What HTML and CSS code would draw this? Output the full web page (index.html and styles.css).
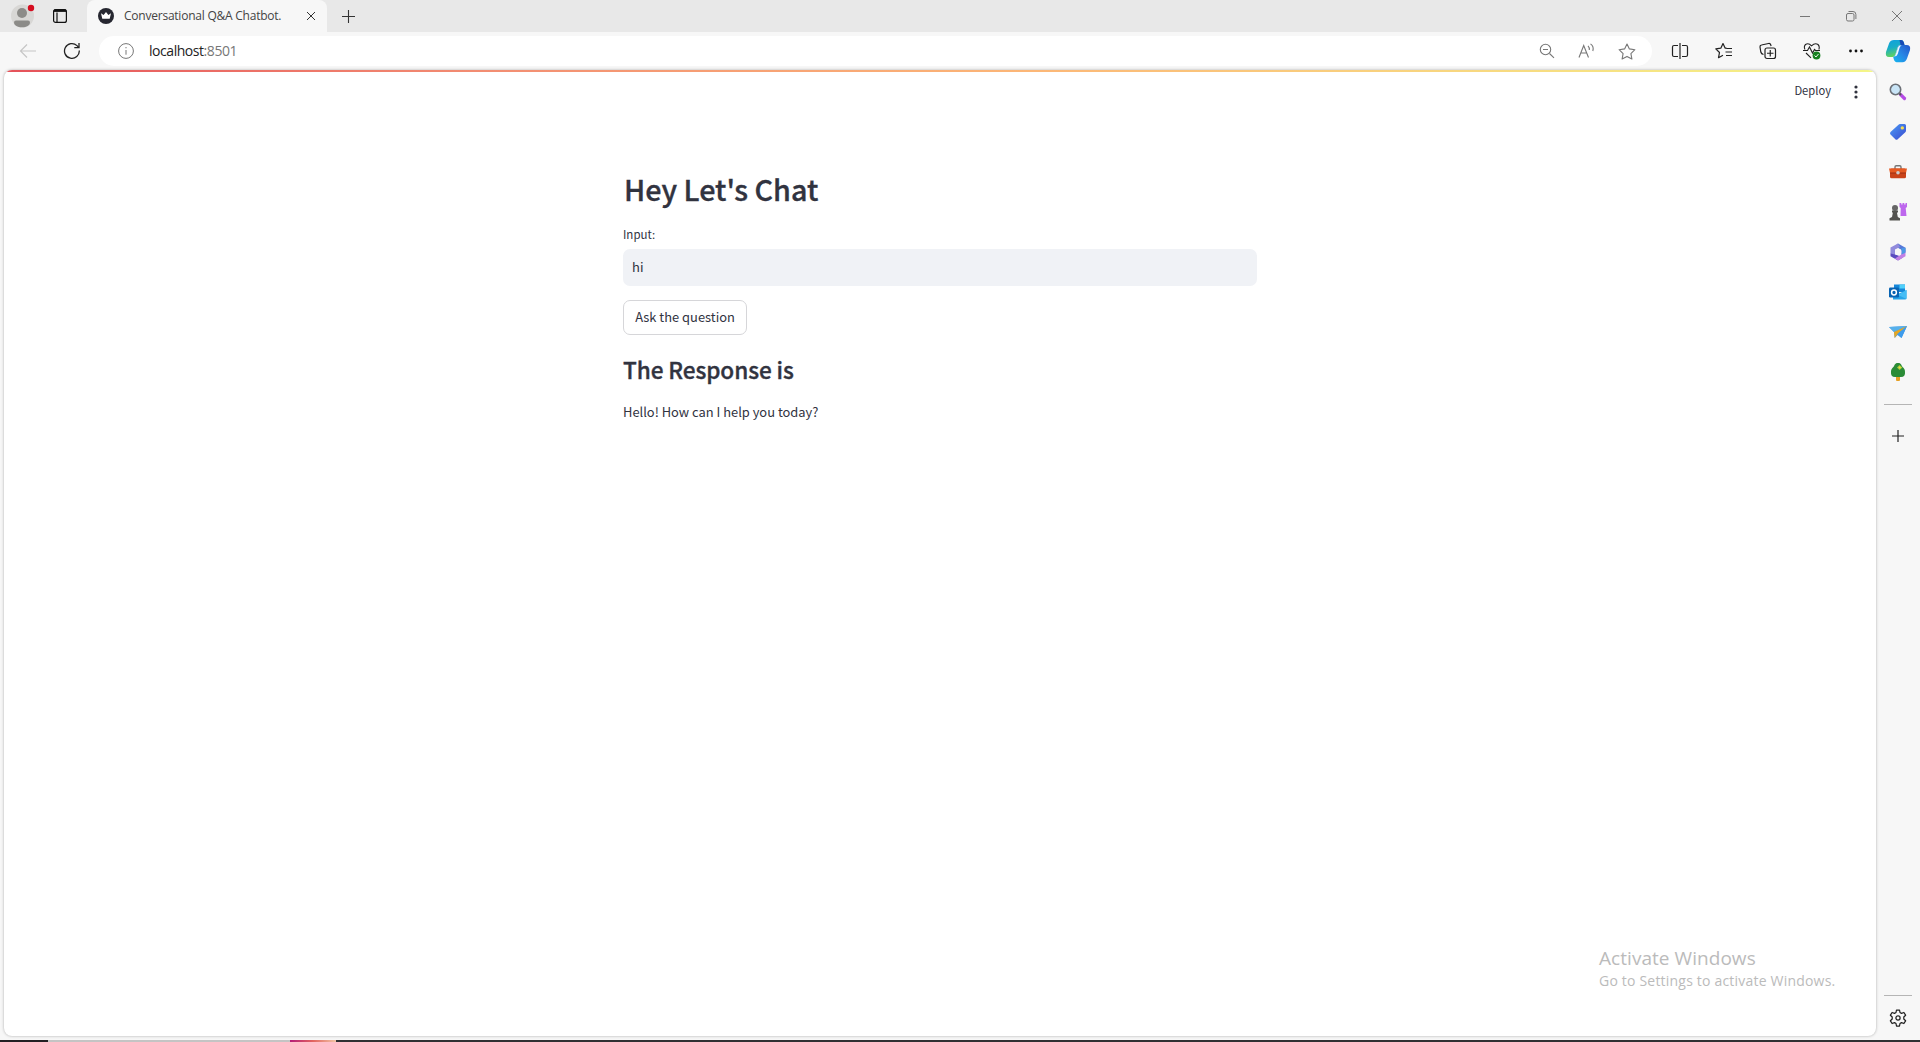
FILE: index.html
```html
<!DOCTYPE html>
<html lang="en">
<head>
<meta charset="utf-8">
<title>Conversational Q&amp;A Chatbot.</title>
<link rel="stylesheet" href="styles.css">
</head>
<body>
<div class="browser">
  <header class="tabstrip">
    <div class="profile"><svg width="24" height="24" viewBox="0 0 24 24"><circle cx="11.500" cy="12" r="11.500" fill="#d8d7d5"/><circle cx="11" cy="9" r="5" fill="#8c8b88"/><path d="M3 18.500q0-2 2-2h12q2 0 2 2c0 3-3.500 4.800-8 4.800s-8-1.800-8-4.800z" fill="#8c8b88"/><circle cx="20" cy="4" r="3.200" fill="#d50d20"/></svg></div>
    <div class="workspaces"><svg width="16" height="16" viewBox="0 0 16 16" fill="none" stroke="#111" stroke-width="1.200"><rect x="1.600" y="1.600" width="12.800" height="12.800" rx="2"/><path d="M1.600 3.200h12.800M5 4.500v10"/><path d="M2 2.500h12" stroke-width="2.200"/></svg></div>
    <div class="tab">
      <svg width="16" height="16" viewBox="0 0 16 16"><circle cx="8" cy="8" r="8" fill="#262730"/><path d="M3 5.300l2.600 1.800L8 3.900l2.400 3.200L13 5.300l-1.300 5.500H4.300z" fill="#fff"/></svg>
      <span class="tab-title">Conversational Q&amp;A Chatbot.</span>
      <svg class="tab-close" width="10" height="10" viewBox="0 0 10 10" stroke="#333" stroke-width="1"><path d="M1 1l8 8M9 1L1 9"/></svg>
    </div>
    <svg class="new-tab" width="15" height="15" viewBox="0 0 15 15" stroke="#333" stroke-width="1.100"><path d="M7.500 1v13M1 7.500h13"/></svg>
    <div class="window-controls">
      <svg width="12" height="12" viewBox="0 0 12 12" stroke="#777"><path d="M1 6.500h10"/></svg>
      <svg width="12" height="12" viewBox="0 0 12 12" fill="none" stroke="#777"><rect x="1.500" y="3.500" width="7.500" height="7.500" rx="1.500"/><path d="M3.500 1.500H8Q10.900 1.500 10.900 4.500V9"/></svg>
      <svg width="12" height="12" viewBox="0 0 12 12" stroke="#777"><path d="M1 1l10 10M11 1L1 11"/></svg>
    </div>
  </header>
  <nav class="toolbar">
    <svg class="back" width="18" height="16" viewBox="0 0 18 16" fill="none" stroke="#c6c6c6" stroke-width="1.200"><path d="M17 8H1.500M8 1.500L1.500 8 8 14.500"/></svg>
    <svg class="reload" width="18" height="18" viewBox="0 0 18 18" fill="none" stroke="#222" stroke-width="1.300"><path d="M16.300 8.500A7.400 7.400 0 1 1 14 3.600L15.800 5.500"/><path d="M16 1v4.700h-4.700"/></svg>
    <div class="address">
      <svg width="16" height="16" viewBox="0 0 16 16" fill="none" stroke="#777"><circle cx="8" cy="8" r="7.400"/><path d="M8 7v4.700M8 4v1.300"/></svg>
      <span class="url">localhost<span class="port">:8501</span></span>
      <div class="address-actions">
        <svg width="16" height="16" viewBox="0 0 16 16" fill="none" stroke="#777" stroke-width="1.100"><circle cx="6.500" cy="6.500" r="5.200"/><path d="M10.500 10.500l4.500 4.300M4 6.500h5"/></svg>
        <svg width="17" height="16" viewBox="0 0 17 16" fill="none" stroke="#777" stroke-width="1.100"><path d="M1 14.500L5.700 2.500 10.500 14.500M2.700 10h6.200M10 2.800q1.700 1.700 1.300 4.200M12.500.900Q16.200 3.500 14.800 8"/></svg>
        <svg width="18" height="17" viewBox="0 0 18 17" fill="none" stroke="#777" stroke-width="1.100" stroke-linejoin="round"><path d="M9 1l2.400 4.900 5.500.8-4 3.900 1 5.400L9 13.400 4.100 16l1-5.400-4-3.900 5.500-.8z"/></svg>
      </div>
    </div>
    <div class="actions">
      <svg width="18" height="18" viewBox="0 0 18 18" fill="none" stroke="#222" stroke-width="1.200"><path d="M7 3.500H3q-1.500 0-1.500 1.500v8q0 1.500 1.500 1.500h4M11 3.500h4q1.500 0 1.500 1.500v8q0 1.500-1.500 1.500h-4M9 1v16"/></svg>
      <svg width="18" height="18" viewBox="0 0 18 18" fill="none" stroke="#222" stroke-width="1.200" stroke-linejoin="round"><path d="M11.500 6.200h-1.300L8 1.500 5.800 6.200l-5 .7 3.700 3.600-1 5.200L8 13.300M11.500 6.500H17M10.500 10H17M11 13.500h6"/></svg>
      <svg width="18" height="18" viewBox="0 0 18 18" fill="none" stroke="#222" stroke-width="1.200"><path d="M4.500 12.500Q2.300 12 1.800 10L1 5q-.2-1.700 1.500-2l7-1.500q1.800-.3 2.300 1.500l.3 1"/><rect x="6" y="6" width="10.500" height="10.500" rx="2"/><path d="M11.250 8v6.500M8 11.250h6.500"/></svg>
      <svg width="18" height="18" viewBox="0 0 18 18" fill="none" stroke="#222" stroke-width="1.100"><path d="M2 7.500Q.5 4.500 2.500 2.500 5.500.500 8.500 3.800 12 .500 15 2.500q2 2 .8 5M0 8.500h4.500L6.500 5l3 6 2-3.500 1 1h4.500M3 11l5 4.800"/><circle cx="13.500" cy="13.500" r="3.900" fill="#168020" stroke="none"/><path d="M11.500 13.500l1.500 1.500 2.500-3" stroke="#fff" stroke-width=".9"/></svg>
      <svg width="18" height="18" viewBox="0 0 18 18" fill="#111"><circle cx="3.500" cy="9" r="1.400"/><circle cx="9" cy="9" r="1.400"/><circle cx="14.500" cy="9" r="1.400"/></svg>
    </div>
    <svg class="copilot" width="26" height="24" viewBox="0 0 26 24">
      <defs><linearGradient id="cpA" x1="0" y1="0" x2=".3" y2="1"><stop stop-color="#109fe0"/><stop offset=".5" stop-color="#18adc7"/><stop offset="1" stop-color="#62d45b"/></linearGradient><linearGradient id="cpB" x1="1" y1="0" x2="0" y2="1"><stop stop-color="#2355c9"/><stop offset=".5" stop-color="#2785e5"/><stop offset="1" stop-color="#14b8ef"/></linearGradient></defs>
      <path d="M9 1h7q2 0 2.700 2l.8 3h-4q-2 0-2.700 2l-2.600 8q-.7 2-2.700 2H4q-4 0-3-5L4.200 4Q5.500 1 9 1z" fill="url(#cpA)"/>
      <path d="M17.500 23.200h-6q-2.500 0-3.300-5.400 1.500-.300 2.200-2l2.600-8Q14 6 16 6h5.500q4.500 0 3.500 5l-3 8.500q-1.200 3.700-4.500 3.700z" fill="url(#cpB)"/><path d="M14.500 1H16q2 0 2.700 2l.8 3h-4Z" fill="#1749b5"/><path d="M16.800 6.500q-1.600.3-2.100 2l-2 6.500q-.8 2.500-3.700 2.500 1.200-.5 1.700-2l2.300-7q.7-2 2.400-2z" fill="#edfaff"/>
    </svg>
  </nav>
  <div class="workspace">
    <main class="page">
      <div class="decoration"></div>
      <div class="app-header"><span class="deploy">Deploy</span><svg width="4" height="14" viewBox="0 0 4 14" fill="#31333f"><circle cx="2" cy="2" r="1.600"/><circle cx="2" cy="7" r="1.600"/><circle cx="2" cy="12" r="1.600"/></svg></div>
      <section class="content">
        <h1>Hey Let's Chat</h1>
        <label>Input:</label>
        <div class="text-input">hi</div>
        <button class="ask">Ask the question</button>
        <h2>The Response is</h2>
        <p>Hello! How can I help you today?</p>
      </section>
      <div class="watermark"><div class="wm-title">Activate Windows</div><div class="wm-text">Go to Settings to activate Windows.</div></div>
    </main>
    <aside class="sidebar">
      <svg width="18" height="18" viewBox="0 0 18 18"><path d="M11.500 11.500l4 4" stroke="#b54be5" stroke-width="3.200" stroke-linecap="round"/><path d="M10 10l2 2" stroke="#555" stroke-width="2"/><circle cx="6.500" cy="6.500" r="5.200" fill="#c9e5f7" stroke="#6c7077" stroke-width="1.600"/></svg>
      <svg width="18" height="18" viewBox="0 0 18 18"><defs><linearGradient id="tg" x2="1" y2="1"><stop stop-color="#4b9cf6"/><stop offset="1" stop-color="#3b49cf"/></linearGradient></defs><path d="M9.500 1.700q.6-.6 1.500-.6L15.500 1q1.500 0 1.500 1.500v5q0 1-.7 1.800L8.700 16.300q-1.200 1-2.400 0L1.500 11.500q-1-1.200 0-2.400z" fill="url(#tg)"/><circle cx="13.300" cy="4.900" r="1.700" fill="#f7dd51"/></svg>
      <svg width="18" height="18" viewBox="0 0 18 18"><path d="M6 6V4q0-1.200 1.200-1.200h3.600Q12 2.800 12 4v2" fill="none" stroke="#777" stroke-width="1.400"/><rect x="1" y="5.500" width="16" height="9.800" rx="1.500" fill="#c94319"/><path d="M0 5.500h18l-1 4.500H1z" fill="#e65a22"/><path d="M1 10h16" stroke="#9c2f13"/><circle cx="9" cy="9.800" r="1.800" fill="#ccc"/></svg>
      <svg width="18" height="18" viewBox="0 0 18 18"><path d="M10.500 0h1.800v1.600h1.200V0h1.800v1.600h1.200V0H18v4l-1.300 1 .8 8h-6l.2-8-1.200-1z" fill="#bd67ed"/><circle cx="6" cy="5" r="3" fill="#666"/><path d="M3 7.500h6v1.600l-1 .9.8 4 2.200 1.200V17.500H.5v-2.300l2.500-1.200.8-4L3 9.100z" fill="#53524f"/></svg>
      <svg width="18" height="18" viewBox="0 0 18 18"><path d="M9 .500l7.500 4.300v4L12.500 11V7L6 3z" fill="#5778d8"/><path d="M9 .500L1.500 4.500v6.200l4.500 2V6.500L11 4z" fill="#918bdc"/><path d="M1.500 10.500v2.800L9 17.500l5-3-6-2.400z" fill="#5b4bbf"/><path d="M16.500 7v6.200L9 17.500l-3-2 6.200-4 .3-4z" fill="#c280e5"/><path d="M12.500 5l4-.2v5l-4 1.700z" fill="#4d98e5"/><circle cx="9.200" cy="9" r="3.200" fill="#f7f7f7"/></svg>
      <svg width="18" height="18" viewBox="0 0 18 18"><path d="M5 1.500h11V9H5z" fill="#1687d9"/><path d="M10.500 1.500H16v4h-5.500z" fill="#50d0fa"/><path d="M4 8l5 3 8.500-4v8q0 1.500-1.500 1.500H4z" fill="#26a4e8"/><path d="M9 12l8.500-5v9z" fill="#45bdf5"/><rect y="4.500" width="10" height="10" rx="1.300" fill="#0864b3"/><circle cx="5" cy="9.500" r="2.400" fill="none" stroke="#fff" stroke-width="1.500"/></svg>
      <svg width="18" height="18" viewBox="0 0 18 18"><path d="M0 4l18-1-5.500 12-4-3-2.800 3L5 9z" fill="#4698e4"/><path d="M0 4l18-1L5 9z" fill="#56b0eb"/><path d="M5 9l13-6-9.500 8-2.800 4z" fill="#e5a724"/><path d="M8.500 11L18 3l-5.500 12z" fill="#3e9cec"/></svg>
      <svg width="18" height="18" viewBox="0 0 18 18"><path d="M7 12h4v5.500q-2 1-4 0z" fill="#e6a024"/><path d="M9 0c3 0 3.500 2.200 4.200 3.500C15.500 5.500 16 7 16 9q.5 5-4 5H6q-4.500 0-4-5c0-2 .5-3.500 2.800-5.500C5.500 2.200 6 0 9 0z" fill="#2b8c37"/><path d="M10.500 2l3 2.500-3 2.500L8 4.500z" fill="#a6cf39"/><circle cx="10.700" cy="4.500" r="1" fill="#f7d44b"/></svg>
      <hr>
      <svg class="add" width="14" height="14" viewBox="0 0 14 14" stroke="#222" stroke-width="1.200"><path d="M7 1v12M1 7h12"/></svg>
      <hr class="bottom-rule">
      <svg class="settings" width="18" height="18" viewBox="0 0 18 18" fill="none" stroke="#222" stroke-width="1.250" stroke-linejoin="round"><circle cx="9" cy="9" r="2.100"/><path d="M7.500 1h3l.5 2.500 1.500.9 2.400-.9 1.700 2.700L14.800 8v2l1.800 1.800-1.700 2.700-2.400-.9-1.500.9-.5 2.500h-3L7 14.500l-1.500-.9-2.400.9-1.700-2.700L3.200 10V8L1.400 6.200l1.700-2.700 2.400.9L7 3.500z"/></svg>
    </aside>
  </div>
  <footer class="taskbar"><div class="task-dark"></div><div class="task-search"></div><div class="task-art"></div><div class="task-rest"></div></footer>
</div>
</body>
</html>
```
FILE: styles.css
```css
* { box-sizing: border-box; }
body { margin: 0; background: #f7f7f7; font-family: "Noto Sans CJK SC", "Noto Sans", sans-serif; color: #31333f; }
svg { display: block; flex: none; }
.browser { display: flex; flex-direction: column; height: 1042px; overflow: hidden; }
.tabstrip { display: flex; align-items: center; height: 32px; flex: none; background: #e8e8e8; }
.profile { margin-left: 11px; }
.workspaces { margin-left: 17px; }
.tab { display: flex; align-items: center; width: 240px; height: 32px; margin-left: 19px; padding: 0 11px; background: #f7f7f7; border-radius: 8px 8px 0 0; }
.tab-title { margin-left: 10px; font: 12px/18px "Open Sans", sans-serif; letter-spacing: -.23px; color: #444; white-space: nowrap; }
.tab-close { margin-left: auto; }
.new-tab { margin-left: 14px; }
.window-controls { display: flex; gap: 34px; margin-left: auto; margin-right: 17px; }
.toolbar { display: flex; align-items: center; height: 38px; flex: none; background: #f7f7f7; }
.back { margin-left: 19px; }
.reload { margin-left: 26px; }
.address { display: flex; align-items: center; width: 1553px; height: 30px; margin-left: 18px; padding: 0 16px 0 19px; background: #fff; border-radius: 15px; }
.url { margin-left: 15px; font: 14px/20px "Open Sans", sans-serif; letter-spacing: -.45px; color: #222; }
.port { color: #777; }
.address-actions { display: flex; align-items: center; gap: 23px; margin-left: auto; }
.actions { display: flex; gap: 26px; margin-left: 19px; }
.copilot { margin-left: 20px; }
.workspace { display: flex; flex: 1; padding-left: 4px; }
.page { display: flex; flex-direction: column; width: 1872px; height: 966px; overflow: hidden; background: #fff; border-radius: 8px; box-shadow: 0 0 3px rgba(0,0,0,.3); }
.decoration { height: 2px; flex: none; background: linear-gradient(90deg, #e5525a, #f28c72 25%, #fcb777 55%, #f4f688); }
.app-header { display: flex; justify-content: flex-end; align-items: center; height: 39px; padding-right: 18px; gap: 23px; }
.deploy { margin-top: -4px; font-size: 11.200px; line-height: 20px; }
.content { display: flex; flex-direction: column; align-items: flex-start; width: 634px; margin: 56px 0 0 619px; }
h1, h2, p { margin: 0; white-space: nowrap; }
h1, h2 { font-weight: 500; -webkit-text-stroke: .35px #31333f; }
h1 { padding-left: 1px; font-size: 28.700px; line-height: 44px; }
label { margin-top: 14px; font-size: 11.500px; line-height: 18px; }
.text-input { width: 634px; height: 37px; margin-top: 6px; padding-left: 9px; background: #f0f2f6; border-radius: 7px; font-size: 13px; line-height: 35px; }
.ask { width: 124px; height: 35px; margin-top: 14px; padding: 0 0 2px; background: #fff; border: 1px solid #d6d6d9; border-radius: 7px; font: 12.900px/30px "Noto Sans CJK SC", sans-serif; color: #31333f; white-space: nowrap; }
h2 { margin-top: 17px; font-size: 22.600px; line-height: 36px; letter-spacing: -.1px; }
p { margin-top: 14px; font-size: 12.900px; line-height: 20px; }
.watermark { margin: auto 41px 45px auto; width: 236px; color: #bbb; font-family: "Open Sans", sans-serif; white-space: nowrap; }
.wm-title { font-size: 19px; line-height: 24px; letter-spacing: .05px; }
.wm-text { font-size: 14px; line-height: 21px; letter-spacing: .2px; }
.sidebar { display: flex; flex-direction: column; align-items: center; width: 44px; height: 970px; padding-top: 13px; gap: 22px; }
.sidebar hr { width: 28px; height: 1px; margin: 1px 0 0; border: 0; background: #b5b5b5; flex: none; }
.add { margin-top: 2px; }
.sidebar .bottom-rule { margin-top: auto; }
.settings { margin: -9px 0 13px; }
.taskbar { display: flex; height: 2px; flex: none; }
.task-dark { width: 48px; background: #231f23; }
.task-search { width: 242px; background: #c4c4c4; }
.task-art { width: 46px; background: linear-gradient(90deg, #b51d78, #e26460 50%, #f1c4a4); }
.task-rest { flex: 1; background: #303033; }
```
